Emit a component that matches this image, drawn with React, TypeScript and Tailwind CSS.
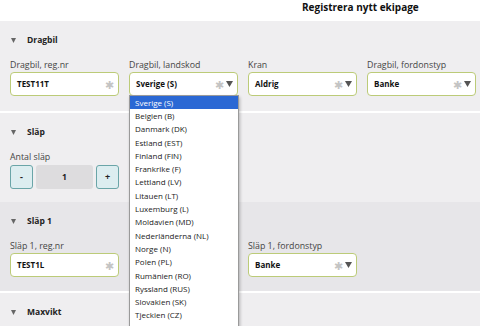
import React from "react";

const font = { fontFamily: '"Open Sans", "Noto Sans", sans-serif' };

function Tri({ className = "" }: { className?: string }) {
  return (
    <svg width="7" height="6" viewBox="0 0 7 6" className={className}>
      <path d="M0 0 H7 L3.5 6 Z" fill="#555" />
    </svg>
  );
}

function Star() {
  return <span className="text-[11px] leading-none text-[#c4c4c4]">✱</span>;
}

function SectionHeader({ title }: { title: string }) {
  return (
    <div className="flex h-[13px] items-center">
      <svg width="5" height="5" viewBox="0 0 5 5" className="ml-[1px] mr-[11px]">
        <path d="M0 0 H5 L2.5 5 Z" fill="#666" />
      </svg>
      <span className="text-[8.5px] font-bold text-[#222]">{title}</span>
    </div>
  );
}

function Field({
  label,
  value,
  select,
}: {
  label: string;
  value: string;
  select?: boolean;
}) {
  return (
    <div className="flex w-[109px] shrink-0 flex-col">
      <div className="h-[11px] whitespace-nowrap text-[8.8px] leading-[11px] text-[#444]">{label}</div>
      <div className="mt-[1px] flex h-[24px] items-center rounded-[4px] border border-[#bccb78] bg-white pl-[6px] pr-[4px]">
        <span className="flex-1 text-[8px] font-bold text-[#111]">{value}</span>
        <Star />
        {select && <Tri className="ml-[2px]" />}
      </div>
    </div>
  );
}

const countries = [
  "Sverige (S)",
  "Belgien (B)",
  "Danmark (DK)",
  "Estland (EST)",
  "Finland (FIN)",
  "Frankrike (F)",
  "Lettland (LV)",
  "Litauen (LT)",
  "Luxemburg (L)",
  "Moldavien (MD)",
  "Nederländerna (NL)",
  "Norge (N)",
  "Polen (PL)",
  "Rumänien (RO)",
  "Ryssland (RUS)",
  "Slovakien (SK)",
  "Tjeckien (CZ)",
];

export default function App() {
  return (
    <div className="relative h-[326px] w-[480px] overflow-hidden bg-white" style={font}>
      <div className="flex h-[21px] items-start pl-[302px] pt-[1px]">
        <span className="text-[10px] font-bold leading-[13px] text-[#111]">Registrera nytt ekipage</span>
      </div>

      <div className="bg-[#efeef0] pb-[15px] pl-[10px] pr-[3px] pt-[13px]">
        <SectionHeader title="Dragbil" />
        <div className="mt-[13px] flex gap-[10px]">
          <Field label="Dragbil, reg.nr" value="TEST11T" />
          <div className="relative shrink-0">
            <Field label="Dragbil, landskod" value="Sverige (S)" select />
            <div className="absolute left-0 top-[35px] z-10 w-[110px] border border-[#9a9a9a] bg-white pb-[30px] shadow-[1px_2px_3px_rgba(0,0,0,0.25)]">
              {countries.map((c, i) => (
                <div
                  key={c}
                  className={
                    i === 0
                      ? "flex h-[13.3px] items-center bg-[#2b68d4] pl-[5px] text-[8px] text-white"
                      : "flex h-[13.3px] items-center pl-[5px] text-[8px] text-[#222]"
                  }
                >
                  {c}
                </div>
              ))}
            </div>
          </div>
          <Field label="Kran" value="Aldrig" select />
          <Field label="Dragbil, fordonstyp" value="Banke" select />
        </div>
      </div>
      <div className="h-[2px] bg-white" />

      <div className="bg-[#efeef0] px-[10px] pb-[13px] pt-[13px]">
        <SectionHeader title="Släp" />
        <div className="mt-[13px] h-[11px] text-[8.8px] leading-[11px] text-[#444]">Antal släp</div>
        <div className="mt-[2px] flex h-[24px] w-[109px] gap-[3px]">
          <button className="flex w-[23px] items-center justify-center rounded-[3px] border border-[#6aa5a8] bg-[#dcedf0] text-[9px] font-bold text-[#222]">
            -
          </button>
          <div className="flex flex-1 items-center justify-center rounded-[3px] bg-[#dddcde] text-[8.5px] font-bold text-[#222]">
            1
          </div>
          <button className="flex w-[23px] items-center justify-center rounded-[3px] border border-[#6aa5a8] bg-[#dcedf0] text-[9px] font-bold text-[#222]">
            +
          </button>
        </div>
      </div>

      <div className="bg-[#e7e6e9] pb-[14px] pl-[10px] pr-[3px] pt-[13px]">
        <SectionHeader title="Släp 1" />
        <div className="mt-[13px] flex gap-[10px]">
          <Field label="Släp 1, reg.nr" value="TEST1L" />
          <div className="w-[109px] shrink-0" />
          <Field label="Släp 1, fordonstyp" value="Banke" select />
        </div>
      </div>
      <div className="h-[2px] bg-white" />

      <div className="h-[40px] bg-[#efeef0] px-[10px] pt-[13px]">
        <SectionHeader title="Maxvikt" />
      </div>
    </div>
  );
}
